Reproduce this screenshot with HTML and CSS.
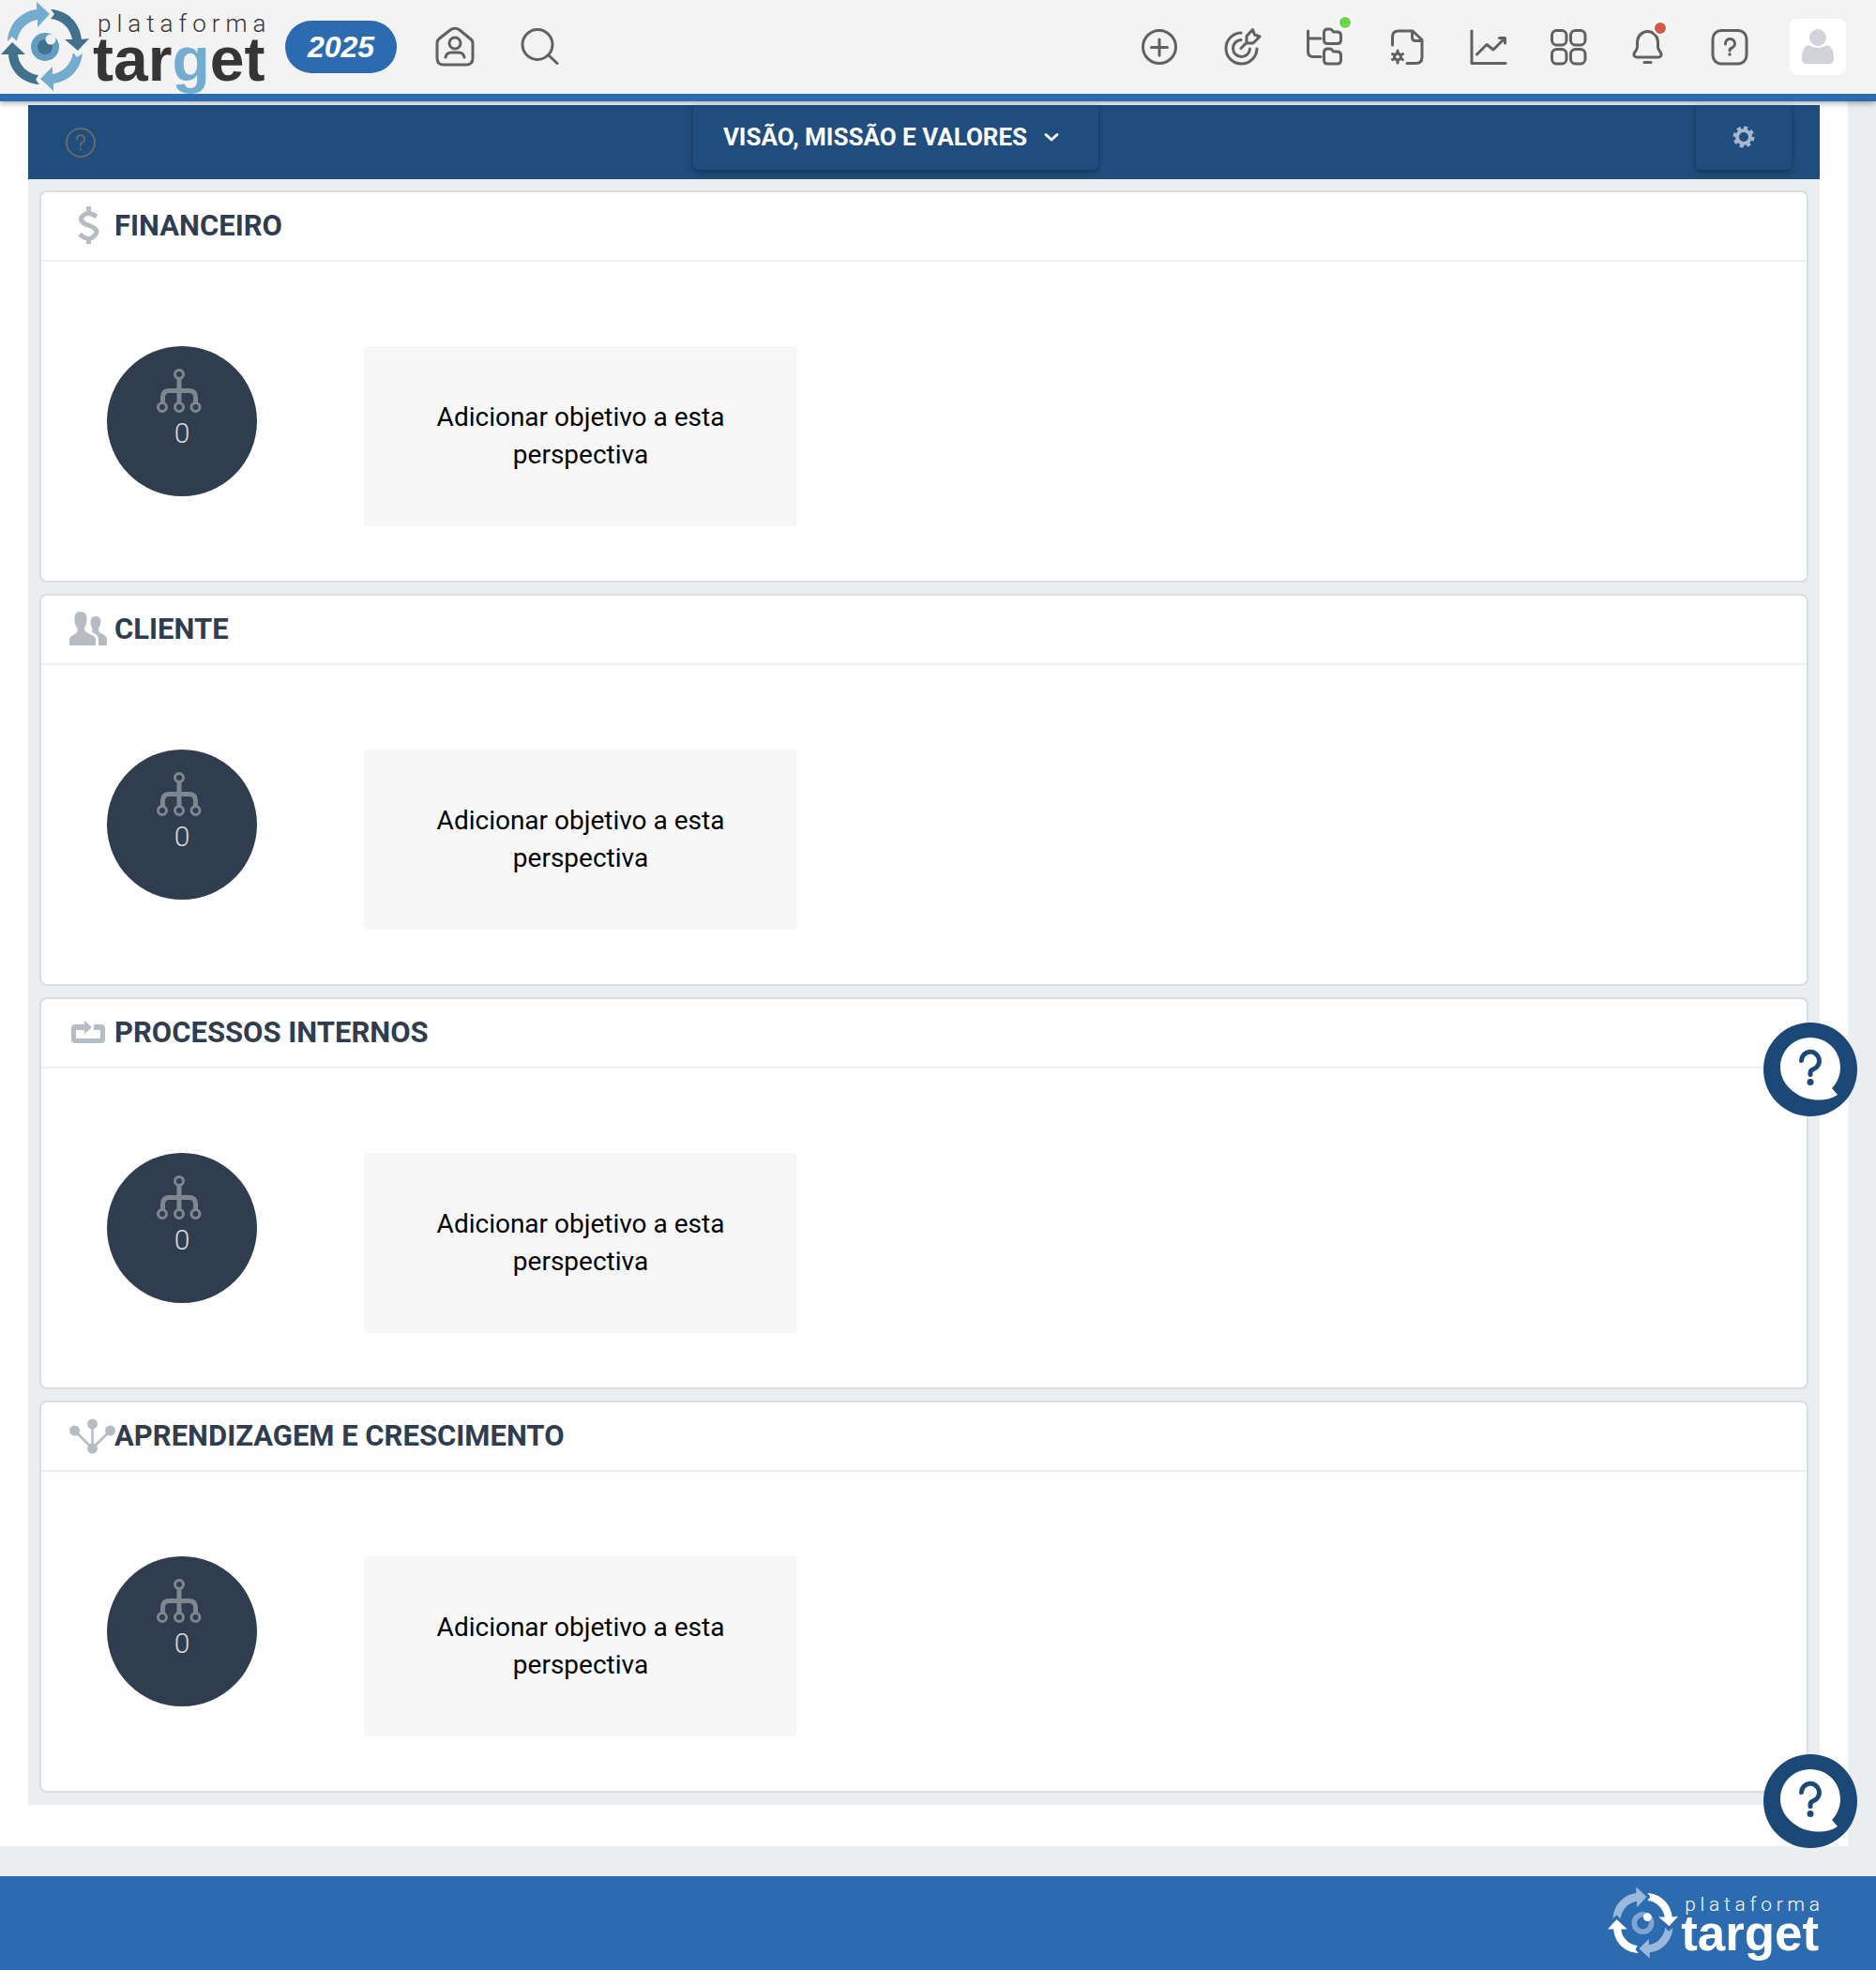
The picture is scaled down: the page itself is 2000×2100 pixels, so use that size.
FILE: index.html
```html
<!DOCTYPE html>
<html lang="pt-BR">
<head>
<meta charset="utf-8">
<meta name="viewport" content="width=device-width, initial-scale=1">
<title>Plataforma Target</title>
<link rel="stylesheet" href="styles.css">
</head>
<body>
<svg class="sprite" aria-hidden="true">
  <symbol id="org" viewBox="0 0 54 48">
    <g fill="none" stroke="currentColor">
      <g stroke-width="3"><circle cx="24" cy="6" r="4.5"/><circle cx="6" cy="41" r="4.5"/><circle cx="24" cy="41" r="4.5"/><circle cx="41.500" cy="41" r="4.5"/></g>
      <path stroke-width="5" d="M24 10.500v26M6.500 36.500v-6q0-7 7-7h21q7 0 7 7v6"/>
    </g>
  </symbol>
  <symbol id="bubble" viewBox="0 0 100 100">
    <path fill="#fff" d="M50 16C68 16 82 30 82 48C82 57 78 65 73 70L79 77C73 81 65 83 57 82.500C36 82 18 66 18 48C18 30 32 16 50 16Z"/>
    <path fill="none" stroke="#1c4878" stroke-width="5" stroke-linecap="round" d="M40.500 40.500a9.500 9.500 0 1 1 12.500 9.300q-3 1-3 3.700v2"/>
    <circle cx="50" cy="63.500" r="3.500" fill="#1c4878"/>
  </symbol>
  <symbol id="emblem" viewBox="0 0 96 100">
    <g class="emblem-light">
      <path d="M8 44C9 26 22 12 39 10V2L53 15L40 29V21C28 23 20 32 18 44L13 39Z"/>
      <path d="M88 57C86 75 73 87 57 89V97L43 84L56 71V79C68 77 76 68 78 56L82 61Z"/>
    </g>
    <g class="emblem-dark">
      <path d="M54 10C72 11 85 24 87 42L95 41L83 54L69 42H77C75 30 66 21 54 20L58 15Z"/>
      <path d="M42 90C24 89 10 76 9 58H1L13 45L27 58H19C20 70 30 79 41 80L38 85Z"/>
    </g>
    <circle class="eye-outer" cx="48" cy="50" r="15"/>
    <circle class="eye-inner" cx="48" cy="50" r="8"/>
    <circle class="eye-shine" cx="54" cy="42" r="5.500"/>
  </symbol>
</svg>

<header class="topbar">
  <a class="logo" href="#" aria-label="Plataforma Target">
    <svg viewBox="0 0 286 100">
      <use href="#emblem" width="96" height="100"/>
      <text class="logo-small" x="104" y="34">plataforma</text>
      <text class="logo-big" x="99" y="86">tar<tspan class="logo-g">g</tspan>et</text>
    </svg>
  </a>
  <button class="year" type="button">2025</button>
  <nav class="tools tools-left" aria-label="Início">
    <a href="#" aria-label="Meu espaço"><svg class="icon" viewBox="0 0 44 44"><path d="M3 18q0-3 2.500-5L17 4q5-3.500 10 0l11 9q3 2 3 5v16q0 7-7 7H10q-7 0-7-7Z"/><circle cx="22" cy="18" r="6"/><path d="M12 33q1-5 6-5h8q5 0 6 5"/></svg></a>
    <a href="#" aria-label="Buscar"><svg class="icon" viewBox="0 0 44 44"><circle cx="18" cy="19.500" r="16"/><path d="M30 31l9 8.500"/></svg></a>
  </nav>
  <nav class="tools tools-right" aria-label="Ferramentas">
    <a href="#" aria-label="Adicionar"><svg class="icon" viewBox="0 0 40 40"><circle cx="20" cy="20" r="17.500"/><path d="M20 12v17M11.500 20.500h17"/></svg></a>
    <a href="#" aria-label="Metas"><svg class="icon" viewBox="0 0 40 40"><path d="M19 5A16.500 16.500 0 1 0 36 22M19 12.500a9 9 0 1 0 9.500 9.500M19 21.500l6-6M25 16V8.500L31.500 1.500l2 5.500 5.500 2L32 16Z"/></svg></a>
    <a href="#" aria-label="Estrutura"><svg class="icon" viewBox="0 0 40 40"><path d="M2.500 3v22q0 5.500 5.500 5.500h8M2.500 11H16M19.500 5q0-4 4-4h2q2 0 3 1.500l1 1.500h4q4 0 4 4v4.500q0 4-4 4h-10q-4 0-4-4ZM19.500 26q0-4 4-4h2q2 0 3 1.500l1 1.500h4q4 0 4 4v5q0 4-4 4h-10q-4 0-4-4Z"/></svg><span class="dot dot-green"></span></a>
    <a href="#" aria-label="Documentos"><svg class="icon" viewBox="0 0 40 40"><path d="M4.500 18V9.500q0-6.500 6.500-6.500h15L36 12.500V31q0 6.500-6.500 6.500H20M25.500 3v6.500q0 4 4 4H36"/><circle cx="10" cy="30.500" r="3.500"/><path d="M10 27v-3M10 37v-3M7 29l-2.500-1.500M13 32l2.500 1.500M7 32l-2.500 1.500M13 29l2.500-1.500"/></svg></a>
    <a href="#" aria-label="Indicadores"><svg class="icon" viewBox="0 0 40 40"><path d="M1 3v34.500h36M6.500 28L17 17.500 24 23 36 11M30.500 10.500H36.500V16"/></svg></a>
    <a href="#" aria-label="Aplicativos"><svg class="icon icon-narrow" viewBox="3 0 36 40"><rect x="1.500" y="2.500" width="15.500" height="15.500" rx="5"/><rect x="21.500" y="2.500" width="15.500" height="15.500" rx="5"/><rect x="1.500" y="22.500" width="15.500" height="15.500" rx="5"/><rect x="21.500" y="22.500" width="15.500" height="15.500" rx="5"/></svg></a>
    <a href="#" aria-label="Notificações"><svg class="icon icon-narrow" viewBox="2 0 36 40"><path d="M7.500 15a11 11.500 0 0 1 22 0v5q0 2 1.500 4 2.500 3 2 5t-4 2H8q-3.500 0-4-2t2-5q1.500-2 1.500-4ZM15 36.500h7"/></svg><span class="dot dot-red"></span></a>
    <a href="#" aria-label="Ajuda"><svg class="icon" viewBox="0 0 40 40"><rect x="2" y="2.500" width="36" height="35.500" rx="9"/><path d="M15.500 17a5 5 0 1 1 7 4q-2.500 1-2.500 3"/><circle class="solid" cx="20" cy="28" r="1.700"/></svg></a>
    <a class="avatar" href="#" aria-label="Perfil"><svg viewBox="0 0 60 60"><circle cx="30" cy="20" r="9"/><path d="M20 28q10 6 20 0 7 2 7 15 0 5-5 5H18q-5 0-5-5 0-13 7-15Z"/></svg></a>
  </nav>
</header>

<main class="page">
  <div class="map">
    <div class="map-bar">
      <a class="map-help" href="#" aria-label="Ajuda do mapa"><svg viewBox="0 0 32 32"><circle cx="16" cy="16" r="15"/><path d="M12 12.500a4 4 0 1 1 5.500 3.500q-1.500.700-1.500 3M16 22.500v1"/></svg></a>
      <button class="bar-button bar-title" type="button">VISÃO, MISSÃO E VALORES
        <svg class="chevron" viewBox="0 0 16 16"><path d="M2 5.500l6 5.500 6-5.500"/></svg>
      </button>
      <button class="bar-button bar-gear" type="button" aria-label="Configurações"><svg viewBox="0 0 24 24"><circle cx="12" cy="12" r="7"/><path stroke-dasharray="4 3.460" d="M12 2.500a9.500 9.500 0 1 1 0 19 9.500 9.500 0 1 1 0-19"/></svg></button>
    </div>

    <section class="card">
      <h2 class="card-title"><svg class="mark" viewBox="0 0 40 40"><path class="line" stroke-width="5" d="M29 11Q21 5 15 9.500T17 19q10 3 11.500 6.500T24 33.500Q17 36 11 29.500M20.500 0v6M20.500 34.500V40"/></svg>FINANCEIRO</h2>
      <div class="card-body">
        <div class="count"><svg><use href="#org"/></svg><span>0</span></div>
        <button class="add" type="button">Adicionar objetivo a esta perspectiva</button>
      </div>
    </section>

    <section class="card">
      <h2 class="card-title"><svg class="mark" viewBox="0 0 40 40"><path d="M12 2q7 0 6.500 7.500.500 6-2.500 9v3q1 2.500 8 5.500 4 1.500 4 5v6H0v-6q0-3.500 4-5 7-3 4-8.500v0q-3-3-2.500-9Q5 2 12 2ZM28 7q5.500 0 5.500 6 0 4-2.500 6.500v3q1 2 5.500 4Q40 28 40 32v6h-9v-6q0-6-7-8 1-3 0-5-1.500-2.500-1.500-6 0-6 5.500-6Z"/></svg>CLIENTE</h2>
      <div class="card-body">
        <div class="count"><svg><use href="#org"/></svg><span>0</span></div>
        <button class="add" type="button">Adicionar objetivo a esta perspectiva</button>
      </div>
    </section>

    <section class="card">
      <h2 class="card-title"><svg class="mark" viewBox="0 0 40 40"><path d="M16 8l8 7-8 7v-4H7v9h26v-9h-7v-6h8q4 0 4 4v12q0 4-4 4H6q-4 0-4-4V16q0-4 4-4h10Z"/></svg>PROCESSOS INTERNOS</h2>
      <div class="card-body">
        <div class="count"><svg><use href="#org"/></svg><span>0</span></div>
        <button class="add" type="button">Adicionar objetivo a esta perspectiva</button>
      </div>
    </section>

    <section class="card">
      <h2 class="card-title"><svg class="mark" viewBox="0 0 40 40"><circle cx="5.500" cy="15" r="5.500"/><circle cx="24.500" cy="8" r="5.500"/><circle cx="43.500" cy="15" r="5.500"/><circle cx="24.500" cy="34" r="5.500"/><path class="line" stroke-width="2.500" d="M5.500 15l19 19 19-19M24.500 8v26"/></svg>APRENDIZAGEM E CRESCIMENTO</h2>
      <div class="card-body">
        <div class="count"><svg><use href="#org"/></svg><span>0</span></div>
        <button class="add" type="button">Adicionar objetivo a esta perspectiva</button>
      </div>
    </section>
  </div>
</main>

<footer class="footer">
  <a class="logo logo-white" href="#" aria-label="Plataforma Target">
    <svg viewBox="0 0 286 100">
      <use href="#emblem" width="96" height="100"/>
      <text class="logo-small" x="104" y="34">plataforma</text>
      <text class="logo-big" x="99" y="86">target</text>
    </svg>
  </a>
</footer>

<button class="support support-upper" type="button" aria-label="Suporte"><svg><use href="#bubble"/></svg></button>
<button class="support" type="button" aria-label="Central de ajuda"><svg><use href="#bubble"/></svg></button>
</body>
</html>
```
FILE: styles.css
```css
* {
  box-sizing: border-box;
}

body {
  position: relative;
  margin: 0;
  background: #eaeef1;
  font-family: Roboto, "Liberation Sans", sans-serif;
  color: #303d4e;
}

button {
  border: 0;
  font-family: inherit;
  cursor: pointer;
}

svg {
  display: block;
  overflow: visible;
}

.sprite {
  position: absolute;
  width: 0;
  height: 0;
}

/* Top bar */
.topbar {
  position: relative;
  z-index: 1;
  display: flex;
  align-items: center;
  height: 108px;
  padding-right: 32px;
  background: #f3f3f3;
  border-bottom: 8px solid #2d6bb1;
  box-shadow: 0 2px 6px rgba(0, 0, 0, 0.35);
}

.logo {
  --light: #73acce;
  --dark: #41718c;
  --eye: #619dc0;
  --pupil: #41718c;
  --shine: #f3f3f3;
  --small: #373435;
  --big: #373435;
}

.logo svg {
  width: 286px;
  height: 100px;
}

.emblem-light { fill: var(--light); }
.emblem-dark { fill: var(--dark); }
.eye-outer { fill: var(--eye); }
.eye-inner { fill: var(--pupil); }
.eye-shine { fill: var(--shine); }

.logo-small {
  fill: var(--small);
  font-size: 26px;
  font-weight: 300;
  letter-spacing: 6px;
}

.logo-big {
  fill: var(--big);
  font-family: "Liberation Sans", Arial, sans-serif;
  font-size: 66px;
  font-weight: 700;
}

.logo-g {
  fill: var(--light);
}

.year {
  width: 119px;
  height: 56px;
  margin-left: 18px;
  padding: 0;
  border-radius: 28px;
  background: #2d6bb1;
  color: #fff;
  font-family: "Liberation Sans", Arial, sans-serif;
  font-size: 32px;
  font-style: italic;
  font-weight: 700;
}

.tools {
  display: flex;
  align-items: center;
  gap: 48px;
}

.tools a {
  position: relative;
}

.tools-left {
  margin-left: 40px;
}

.tools-right {
  margin-left: auto;
}

.icon {
  width: 40px;
  height: 40px;
  fill: none;
  stroke: #616161;
  stroke-width: 3;
  stroke-linecap: round;
  stroke-linejoin: round;
}

.tools-left .icon {
  width: 44px;
  height: 44px;
}

.icon-narrow {
  width: 36px;
}

.icon .solid {
  fill: #616161;
  stroke: none;
}

.dot {
  position: absolute;
  top: -14px;
  right: -10px;
  width: 16px;
  height: 16px;
  border: 2px solid #fff;
  border-radius: 50%;
}

.dot-green {
  background: #6bd849;
}

.dot-red {
  top: -8px;
  right: -2px;
  background: #d75746;
}

.tools .avatar {
  width: 60px;
  height: 60px;
  margin-left: -4px;
  border-radius: 8px;
  background: #fff;
  fill: #d1d3d8;
}

/* Strategy map */
.page {
  margin-right: 30px;
  padding: 4px 30px 44px;
  background: #fff;
}

.map {
  padding-bottom: 13px;
  background: #eaeef1;
}

.map-bar {
  display: flex;
  justify-content: space-between;
  align-items: center;
  height: 79px;
  padding: 0 30px 0 40px;
  background: #1f4e7e;
}

.map-help svg {
  width: 32px;
  height: 32px;
  fill: none;
  stroke: #696969;
  stroke-width: 2;
  stroke-linecap: round;
}

.bar-button {
  display: flex;
  align-items: center;
  align-self: stretch;
  margin-bottom: 10px;
  border-radius: 0 0 6px 6px;
  background: #1f4e7e;
  box-shadow: 0 3px 6px rgba(0, 0, 0, 0.35);
  color: #fff;
}

.bar-title {
  gap: 18px;
  padding: 0 42px 2px 32px;
  font-size: 26px;
  font-weight: 700;
}

.chevron {
  width: 16px;
  height: 16px;
  fill: none;
  stroke: #fff;
  stroke-width: 3;
  stroke-linecap: round;
  stroke-linejoin: round;
}

.bar-gear {
  justify-content: center;
  width: 102px;
  padding: 0 0 2px;
}

.bar-gear svg {
  width: 24px;
  height: 24px;
  fill: none;
  stroke: #a5b8ce;
  stroke-width: 4;
}

.card {
  margin: 12px 12px 0;
  border: 2px solid #dcdcdc;
  border-radius: 8px;
  background: #fff;
}

.card-title {
  display: flex;
  align-items: center;
  gap: 8px;
  height: 74px;
  margin: 0;
  padding: 0 30px 2px;
  border-bottom: 2px solid #eee;
  font-size: 31px;
  font-weight: 700;
}

.mark {
  width: 40px;
  height: 40px;
  fill: #b6bcc4;
}

.mark .line {
  fill: none;
  stroke: #b6bcc4;
}

.card-body {
  display: flex;
  align-items: flex-start;
  gap: 114px;
  padding: 90px 70px 58px;
}

.count {
  display: flex;
  flex-direction: column;
  align-items: center;
  width: 160px;
  height: 160px;
  padding-top: 24px;
  border-radius: 50%;
  background: #303d4e;
  color: #d6d8dc;
  font-size: 30px;
  font-weight: 300;
  line-height: 42px;
}

.count svg {
  width: 54px;
  height: 48px;
  color: #7e8690;
}

.add {
  width: 462px;
  height: 192px;
  padding: 0 60px;
  border-radius: 4px;
  background: #f7f7f7;
  color: #000;
  font-size: 28px;
  line-height: 40px;
}

/* Footer */
.footer {
  display: flex;
  align-items: center;
  justify-content: flex-end;
  height: 100px;
  margin-top: 32px;
  padding-right: 58px;
  background: #2d6bb1;
}

.logo-white {
  --light: #9ab8db;
  --dark: #fff;
  --eye: #7fa5d2;
  --pupil: #2d6bb1;
  --shine: #fff;
  --small: #fff;
  --big: #fff;
}

.logo-white svg {
  width: 229px;
  height: 80px;
}

/* Floating support buttons */
.support {
  position: absolute;
  z-index: 2;
  right: 20px;
  bottom: 130px;
  width: 100px;
  height: 100px;
  padding: 0;
  border-radius: 50%;
  background: #1c4878;
}

.support-upper {
  bottom: 910px;
}

.support svg {
  width: 100px;
  height: 100px;
}
```
